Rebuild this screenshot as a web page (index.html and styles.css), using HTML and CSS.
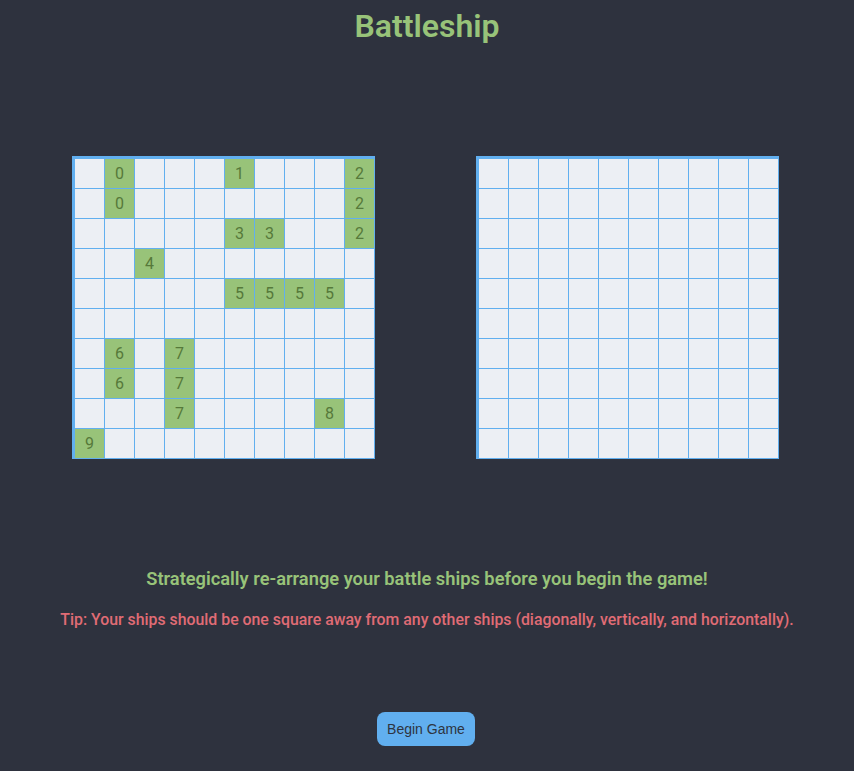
FILE: index.html
```html
<!DOCTYPE html>
<html>
<head>
<meta charset="utf-8">
<title>Battleship</title>
<link rel="stylesheet" href="styles.css">
</head>
<body>
<h1 class="title">Battleship</h1>
<div class="boards">
  <div class="board">
    <div class="cell"></div><div class="cell ship">0</div><div class="cell"></div><div class="cell"></div><div class="cell"></div><div class="cell ship">1</div><div class="cell"></div><div class="cell"></div><div class="cell"></div><div class="cell ship">2</div>
    <div class="cell"></div><div class="cell ship">0</div><div class="cell"></div><div class="cell"></div><div class="cell"></div><div class="cell"></div><div class="cell"></div><div class="cell"></div><div class="cell"></div><div class="cell ship">2</div>
    <div class="cell"></div><div class="cell"></div><div class="cell"></div><div class="cell"></div><div class="cell"></div><div class="cell ship">3</div><div class="cell ship">3</div><div class="cell"></div><div class="cell"></div><div class="cell ship">2</div>
    <div class="cell"></div><div class="cell"></div><div class="cell ship">4</div><div class="cell"></div><div class="cell"></div><div class="cell"></div><div class="cell"></div><div class="cell"></div><div class="cell"></div><div class="cell"></div>
    <div class="cell"></div><div class="cell"></div><div class="cell"></div><div class="cell"></div><div class="cell"></div><div class="cell ship">5</div><div class="cell ship">5</div><div class="cell ship">5</div><div class="cell ship">5</div><div class="cell"></div>
    <div class="cell"></div><div class="cell"></div><div class="cell"></div><div class="cell"></div><div class="cell"></div><div class="cell"></div><div class="cell"></div><div class="cell"></div><div class="cell"></div><div class="cell"></div>
    <div class="cell"></div><div class="cell ship">6</div><div class="cell"></div><div class="cell ship">7</div><div class="cell"></div><div class="cell"></div><div class="cell"></div><div class="cell"></div><div class="cell"></div><div class="cell"></div>
    <div class="cell"></div><div class="cell ship">6</div><div class="cell"></div><div class="cell ship">7</div><div class="cell"></div><div class="cell"></div><div class="cell"></div><div class="cell"></div><div class="cell"></div><div class="cell"></div>
    <div class="cell"></div><div class="cell"></div><div class="cell"></div><div class="cell ship">7</div><div class="cell"></div><div class="cell"></div><div class="cell"></div><div class="cell"></div><div class="cell ship">8</div><div class="cell"></div>
    <div class="cell ship">9</div><div class="cell"></div><div class="cell"></div><div class="cell"></div><div class="cell"></div><div class="cell"></div><div class="cell"></div><div class="cell"></div><div class="cell"></div><div class="cell"></div>
  </div>
  <div class="board">
    <div class="cell"></div><div class="cell"></div><div class="cell"></div><div class="cell"></div><div class="cell"></div><div class="cell"></div><div class="cell"></div><div class="cell"></div><div class="cell"></div><div class="cell"></div>
    <div class="cell"></div><div class="cell"></div><div class="cell"></div><div class="cell"></div><div class="cell"></div><div class="cell"></div><div class="cell"></div><div class="cell"></div><div class="cell"></div><div class="cell"></div>
    <div class="cell"></div><div class="cell"></div><div class="cell"></div><div class="cell"></div><div class="cell"></div><div class="cell"></div><div class="cell"></div><div class="cell"></div><div class="cell"></div><div class="cell"></div>
    <div class="cell"></div><div class="cell"></div><div class="cell"></div><div class="cell"></div><div class="cell"></div><div class="cell"></div><div class="cell"></div><div class="cell"></div><div class="cell"></div><div class="cell"></div>
    <div class="cell"></div><div class="cell"></div><div class="cell"></div><div class="cell"></div><div class="cell"></div><div class="cell"></div><div class="cell"></div><div class="cell"></div><div class="cell"></div><div class="cell"></div>
    <div class="cell"></div><div class="cell"></div><div class="cell"></div><div class="cell"></div><div class="cell"></div><div class="cell"></div><div class="cell"></div><div class="cell"></div><div class="cell"></div><div class="cell"></div>
    <div class="cell"></div><div class="cell"></div><div class="cell"></div><div class="cell"></div><div class="cell"></div><div class="cell"></div><div class="cell"></div><div class="cell"></div><div class="cell"></div><div class="cell"></div>
    <div class="cell"></div><div class="cell"></div><div class="cell"></div><div class="cell"></div><div class="cell"></div><div class="cell"></div><div class="cell"></div><div class="cell"></div><div class="cell"></div><div class="cell"></div>
    <div class="cell"></div><div class="cell"></div><div class="cell"></div><div class="cell"></div><div class="cell"></div><div class="cell"></div><div class="cell"></div><div class="cell"></div><div class="cell"></div><div class="cell"></div>
    <div class="cell"></div><div class="cell"></div><div class="cell"></div><div class="cell"></div><div class="cell"></div><div class="cell"></div><div class="cell"></div><div class="cell"></div><div class="cell"></div><div class="cell"></div>
  </div>
</div>
<p class="info">Strategically re-arrange your battle ships before you begin the game!</p>
<p class="tip">Tip: Your ships should be one square away from any other ships (diagonally, vertically, and horizontally).</p>
<div class="actions">
  <button class="start">Begin Game</button>
</div>
</body>
</html>
```
FILE: styles.css
```css
html, body {
  margin: 0;
  padding: 0;
  background: #2e323e;
  height: 100%;
}
body {
  font-family: Roboto, "Liberation Sans", sans-serif;
  display: flex;
  flex-direction: column;
}
.title {
  margin: 0;
  padding-top: 7px;
  font-size: 32px;
  line-height: 38px;
  font-weight: 600;
  color: #98c379;
  text-align: center;
}
.boards {
  display: flex;
  padding-left: 72px;
  gap: 101px;
  margin-top: 111px;
}
.board {
  display: grid;
  grid-template-columns: repeat(10, 30px);
  grid-auto-rows: 30px;
  border-left: 3px solid #61afef;
  border-top: 3px solid #61afef;
}
.cell {
  box-sizing: border-box;
  background: #eceff4;
  border-right: 1px solid #61afef;
  border-bottom: 1px solid #61afef;
  display: flex;
  align-items: center;
  justify-content: center;
  font-size: 16px;
  color: #56793a;
}
.cell.ship {
  background: #98c379;
}
.info {
  margin: 109px 0 0;
  font-size: 18.3px;
  line-height: 22px;
  font-weight: 600;
  color: #98c379;
  text-align: center;
}
.tip {
  margin: 20px 0 0;
  font-size: 15.85px;
  line-height: 20px;
  font-weight: 500;
  color: #e06c75;
  text-align: center;
}
.actions {
  display: flex;
  justify-content: center;
  margin-top: 82px;
}
.start {
  width: 98px;
  height: 34px;
  border: none;
  border-radius: 8px;
  background: #61afef;
  color: #2e3440;
  font-family: "Liberation Sans", Arial, sans-serif;
  font-size: 14px;
  padding: 0;
  margin-left: -2px;
}
```
